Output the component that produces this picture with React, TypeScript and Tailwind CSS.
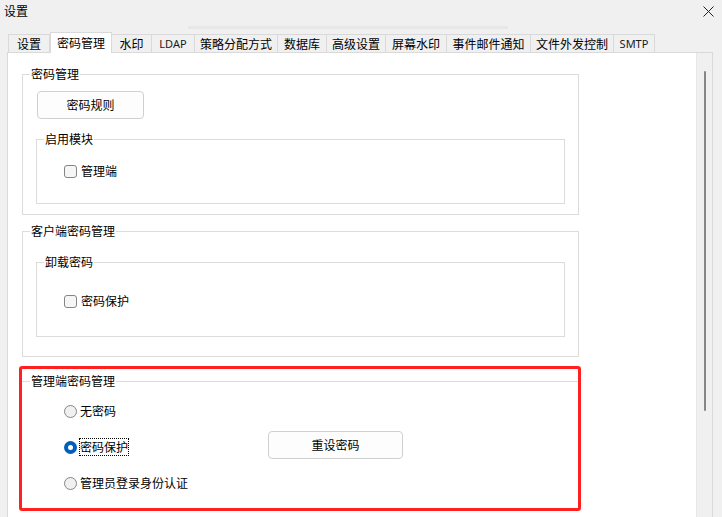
import React from "react";

const FONT = "font-['Noto_Sans_CJK_SC','Microsoft_YaHei',sans-serif]";

function Checkbox() {
  return <span className="block h-[13px] w-[13px] shrink-0 rounded-[3px] border border-[#858585] bg-[#f6f6f6]" />;
}

function Radio({ checked }: { checked?: boolean }) {
  if (checked) {
    return (
      <span className="flex h-[13px] w-[13px] shrink-0 items-center justify-center rounded-full bg-[#005fb8]">
        <span className="block h-[5px] w-[5px] rounded-full bg-white" />
      </span>
    );
  }
  return <span className="block h-[13px] w-[13px] shrink-0 rounded-full border border-[#858585] bg-[#f0f0f0]" />;
}

type Tab = { label: string; w: string; latin?: boolean; active?: boolean };

const tabs: Tab[] = [
  { label: "设置", w: "w-[42px]" },
  { label: "密码管理", w: "w-[62px]", active: true },
  { label: "水印", w: "w-[40px]" },
  { label: "LDAP", w: "w-[43px]", latin: true },
  { label: "策略分配方式", w: "w-[83px]" },
  { label: "数据库", w: "w-[49px]" },
  { label: "高级设置", w: "w-[59px]" },
  { label: "屏幕水印", w: "w-[61px]" },
  { label: "事件邮件通知", w: "w-[84px]" },
  { label: "文件外发控制", w: "w-[83px]" },
  { label: "SMTP", w: "w-[41px]", latin: true },
];

export default function App() {
  return (
    <div className={`flex h-[517px] w-[722px] flex-col overflow-hidden bg-[#f0f0f0] text-[12px] text-black ${FONT}`}>
      {/* title bar */}
      <div className="flex h-[22px] shrink-0 items-center justify-between pl-[4px] pr-[8px]">
        <span className="leading-[16px]">设置</span>
        <svg width="11" height="11" viewBox="0 0 11 11" className="mt-[1px]">
          <path d="M0.5 0.5 L10.5 10.5 M10.5 0.5 L0.5 10.5" stroke="#222" strokeWidth="1" fill="none" />
        </svg>
      </div>
      <div className="ml-[188px] mt-[4px] h-[3px] w-[320px] shrink-0 bg-[#e8e8e8]" />

      {/* tabs */}
      <div className="mt-[3px] flex h-[20px] shrink-0 items-end pl-[8px]">
        {tabs.map((t, i) =>
          t.active ? (
            <div
              key={t.label}
              className={`relative z-10 -mb-[1px] flex h-[21px] ${t.w} items-center justify-center border-x border-t border-[#d9d9d9] bg-white leading-[16px]`}
            >
              {t.label}
            </div>
          ) : (
            <div
              key={t.label}
              className={`flex h-[18px] ${t.w} items-center justify-center border-t border-r border-[#d9d9d9] bg-[#f0f0f0] ${i === 0 ? "border-l" : ""} ${t.latin ? "font-['Noto_Sans',sans-serif] text-[11px] text-[#1a1a1a]" : ""} leading-[16px]`}
            >
              {t.label}
            </div>
          )
        )}
      </div>

      {/* panel */}
      <div className="ml-[7px] flex w-[706px] flex-1 border-x border-t border-[#d9d9d9]">
        <div className="flex flex-1 flex-col bg-white">
          {/* group 1 */}
          <fieldset className="ml-[14px] mt-[13px] w-[557px] border border-[#dcdcdc] p-0">
            <legend className="ml-[7px] px-[1px] leading-[16px]">密码管理</legend>
            <div className="flex flex-col pb-[10px] pl-[13px]">
              <button className="ml-[1px] mt-[9px] flex h-[28px] w-[107px] items-center justify-center rounded-[4px] border border-[#d0d0d0] bg-[#fdfdfd] leading-[16px]">
                密码规则
              </button>
              <fieldset className="mt-[12px] w-[529px] border border-[#dcdcdc] p-0">
                <legend className="ml-[7px] px-[1px] leading-[16px]">启用模块</legend>
                <div className="mt-[16px] flex h-[16px] items-center gap-[4px] pl-[27px]">
                  <Checkbox />
                  <span className="leading-[16px]">管理端</span>
                </div>
                <div className="h-[24px]" />
              </fieldset>
            </div>
          </fieldset>

          {/* group 2 */}
          <fieldset className="ml-[14px] mt-[8px] w-[557px] border border-[#dcdcdc] p-0">
            <legend className="ml-[7px] px-[1px] leading-[16px]">客户端密码管理</legend>
            <div className="flex flex-col pb-[19px] pl-[13px]">
              <fieldset className="mt-[15px] w-[529px] border border-[#dcdcdc] p-0">
                <legend className="ml-[7px] px-[1px] leading-[16px]">卸载密码</legend>
                <div className="mt-[23px] flex h-[16px] items-center gap-[4px] pl-[27px]">
                  <Checkbox />
                  <span className="leading-[16px]">密码保护</span>
                </div>
                <div className="h-[27px]" />
              </fieldset>
            </div>
          </fieldset>

          {/* group 3 with red highlight */}
          <div className="ml-[11px] mt-[9px] w-[562px] rounded-[3px] border-[3px] border-[#ff2020] pb-[17px]">
            <fieldset className="mt-[4px] w-full border-t border-[#dcdcdc] p-0">
              <legend className="ml-[8px] px-[1px] leading-[16px]">管理端密码管理</legend>
              <div className="flex flex-col pl-[42px]">
                <div className="mt-[14px] flex h-[16px] items-center gap-[3px]">
                  <Radio />
                  <span className="leading-[16px]">无密码</span>
                </div>
                <div className="mt-[20px] flex h-[16px] items-center">
                  <div className="flex w-[204px] items-center gap-[3px]">
                    <Radio checked />
                    <span className="leading-[16px] outline-1 outline-dotted outline-black">密码保护</span>
                  </div>
                  <button className="-mt-[8px] flex h-[28px] w-[135px] items-center justify-center self-start rounded-[4px] border border-[#d0d0d0] bg-[#fdfdfd] leading-[16px]">
                    重设密码
                  </button>
                </div>
                <div className="mt-[20px] flex h-[16px] items-center gap-[3px]">
                  <Radio />
                  <span className="leading-[16px]">管理员登录身份认证</span>
                </div>
              </div>
            </fieldset>
          </div>
        </div>

        {/* scrollbar */}
        <div className="w-[16px] shrink-0 border-l border-[#e6e6e6] bg-[#f0f0f0]">
          <div className="ml-[7px] mt-[18px] h-[340px] w-[2px] rounded-full bg-[#868686]" />
        </div>
      </div>
    </div>
  );
}
